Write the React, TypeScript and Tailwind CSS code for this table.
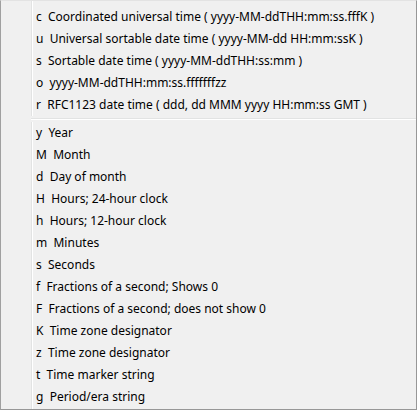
const top = [
  ['c', 'Coordinated universal time ( yyyy-MM-ddTHH:mm:ss.fffK )'],
  ['u', 'Universal sortable date time ( yyyy-MM-dd HH:mm:ssK )'],
  ['s', 'Sortable date time ( yyyy-MM-ddTHH:ss:mm )'],
  ['o', 'yyyy-MM-ddTHH:mm:ss.fffffffzz'],
  ['r', 'RFC1123 date time ( ddd, dd MMM yyyy HH:mm:ss GMT )'],
];

const parts = [
  ['y', 'Year'],
  ['M', 'Month'],
  ['d', 'Day of month'],
  ['H', 'Hours; 24-hour clock'],
  ['h', 'Hours; 12-hour clock'],
  ['m', 'Minutes'],
  ['s', 'Seconds'],
  ['f', 'Fractions of a second; Shows 0'],
  ['F', 'Fractions of a second; does not show 0'],
  ['K', 'Time zone designator'],
  ['z', 'Time zone designator'],
  ['t', 'Time marker string'],
  ['g', 'Period/era string'],
];

function Item({ k, label }: { k: string; label: string }) {
  return (
    <div className="flex h-[22px] items-center">
      <div className="w-[30px] shrink-0 self-stretch" />
      <div className="w-px shrink-0 self-stretch bg-[#e2e3e3]" />
      <div className="w-px shrink-0 self-stretch bg-white" />
      <span className="whitespace-pre pl-[3px]">{k}{'  '}{label}</span>
    </div>
  );
}

export default function App() {
  return (
    <div
      className="flex h-[410px] w-[417px] flex-col border border-t-[#e3e3e3] border-l-[#a0a0a0] border-r-[#979797] border-b-[#979797] bg-[#f0f0f0] text-[12px] text-black"
      style={{ fontFamily: '"Noto Sans", "Open Sans", sans-serif' }}
    >
      <div className="flex h-[5px]">
        <div className="w-[30px]" />
        <div className="w-px bg-[#e2e3e3]" />
        <div className="w-px bg-white" />
      </div>
      {top.map(([k, l]) => (
        <Item key={k + l} k={k} label={l} />
      ))}
      {/* separator */}
      <div className="flex h-[6px]">
        <div className="w-[30px]" />
        <div className="flex flex-1 flex-col pt-[2px]">
          <div className="h-px bg-[#e2e3e3]" />
          <div className="h-px bg-white" />
        </div>
      </div>
      {parts.map(([k, l]) => (
        <Item key={k + l} k={k} label={l} />
      ))}
      <div className="flex flex-1">
        <div className="w-[30px]" />
        <div className="w-px bg-[#e2e3e3]" />
        <div className="w-px bg-white" />
      </div>
    </div>
  );
}
